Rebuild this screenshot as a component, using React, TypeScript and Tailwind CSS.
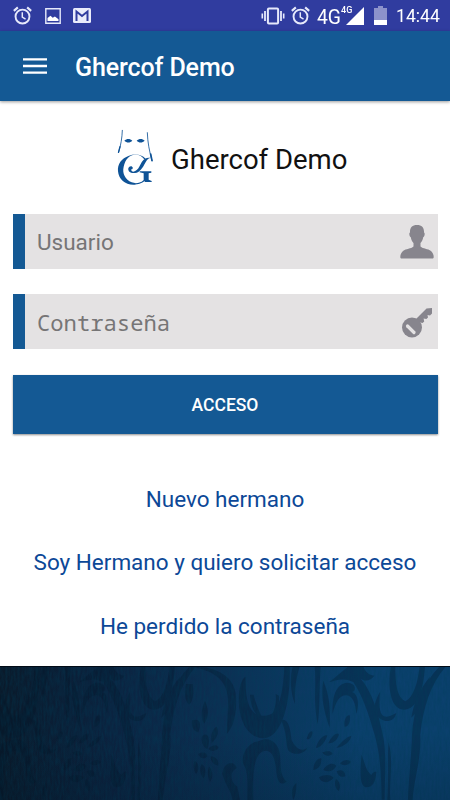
import React from 'react';

function AlarmIcon({ className }: { className?: string }) {
  return (
    <svg viewBox="0 0 18 18" className={className} fill="none" stroke="#e6e9fb">
      <circle cx="9" cy="10" r="6.6" strokeWidth="1.8" />
      <path d="M8.800 6v4.500l3.100 1.900" strokeWidth="1.4" />
      <path d="M.8 4.600 4.600 1.300M17.200 4.600l-3.800-3.300" strokeWidth="2" />
    </svg>
  );
}

function StatusBar() {
  return (
    <div className="flex h-[31px] shrink-0 items-center bg-[#303c9f] pl-[13px] pr-[10px] text-white">
      <AlarmIcon className="h-[19px] w-[19px]" />
      <svg viewBox="0 0 16 16" className="ml-[13px] h-4 w-4">
        <path d="M.8.8h14.400v14.400H.8z" fill="none" stroke="#e6e9fb" strokeWidth="1.400" />
        <path d="M2.500 13V10l3-2.200 2.200 2 2.200-1.300 3.600 2.800V13z" fill="#fff" />
      </svg>
      <svg viewBox="0 0 18 15" className="ml-[12px] h-[15px] w-[18px]">
        <rect width="18" height="15" rx="1.5" fill="#e9ebfb" />
        <path d="M3.500 13V3.500L9 8l5.500-4.500V13" fill="none" stroke="#303c9f" strokeWidth="2" />
      </svg>

      <div className="ml-auto flex items-center">
        <svg viewBox="0 0 24 18" className="mr-[-1px] h-[18px] w-6" fill="none" stroke="#e6e9fb">
          <rect x="6.900" y="1.400" width="10.200" height="15.200" rx="1" strokeWidth="2" />
          <path d="M4 4v10M20 4v10" strokeWidth="1.800" />
          <path d="M1.300 6.500v5M22.700 6.500v5" strokeWidth="1.600" />
        </svg>
        <AlarmIcon className="ml-[7px] h-[19px] w-[19px]" />
        <span className="ml-[7px] mt-[2px] w-[24px] origin-left scale-x-[.92] text-[21px] leading-5">4G</span>
        <span className="mb-[11px] w-[12px] origin-left scale-x-95 text-[9.500px] font-medium leading-[10px]">4G</span>
        <svg viewBox="0 0 18 18" className="-ml-[7px] h-[18px] w-[18px]">
          <path d="M18 0v18H0z" fill="#fff" />
        </svg>
        <svg viewBox="0 0 13 19" className="ml-[10px] h-[19px] w-[13px]">
          <path d="M0 2h4V0h5v2h4v12H0z" fill="#8c92cb" />
          <path d="M0 14h13v5H0z" fill="#fff" />
        </svg>
        <span className="ml-[9px] mt-px w-[44px] origin-left scale-x-[.98] whitespace-nowrap text-[18px] leading-5">14:44</span>
      </div>
    </div>
  );
}

function Logo() {
  return (
    <svg viewBox="0 0 120 180" className="h-[60px] w-10" fill="#0f5396">
      <g stroke="#0f5396" strokeLinecap="round" fill="none">
        <path d="M19 7C18 30 15 50 8 72" strokeWidth="2.500" />
        <path d="M12 56 7.500 73" strokeWidth="4" />
        <path d="M94 14c1 30 6 55 14 84" strokeWidth="2.500" />
        <path d="m104 78 4 20" strokeWidth="5" />
      </g>
      <path d="M25 38c7-7 17-7 24 0-7 7-17 7-24 0zM62 38c7-7 17-7 24 0-7 7-17 7-24 0z" />
      <path d="M89 92C76 79 57 76 39 83 16 91 4 108 6 130c2 25 24 42 50 40 18-1 31-9 40-22l-4-2c-12 18-29 23-45 17-19-8-29-27-24-47 5-22 16-35 34-36 12-1 22 5 29 15z" />
      <path d="M104 90c-7 0-11 5-16 14-8 15-16 29-31 31-13 2-22-5-20-14 2-7 10-9 13-3 1 4-1 7-5 6 1 7 6 8 11 6 12-4 16-20 23-30 6-8 14-12 25-10z" />
      <path d="M71 130h35v4l-8 2v19l9 4v3H87l-4-6v-20l-12-3z" />
    </svg>
  );
}

function Field({ label, mono, children }: { label: string; mono?: boolean; children: React.ReactNode }) {
  return (
    <div className="flex h-[55px] items-center border-l-[12px] border-[#145994] bg-[#e4e2e3] pl-[12.500px] pr-1">
      <span
        className={
          mono
            ? "flex-1 pt-[2px] font-['Noto_Sans_Mono','DejaVu_Sans_Mono',monospace] text-[22.200px] text-[#767576]"
            : 'flex-1 pt-[3px] text-[22.500px] text-[#767576]'
        }
      >
        {label}
      </span>
      {children}
    </div>
  );
}

// One repeat of the damask, drawn twice across the footer
function Damask() {
  return (
    <g fill="#04182b">
      <path d="M556 5c50 8 102 20 121 67 15 38 2 92 4 137 24-24 31-79 26-121C699 33 645 5 556 5zM558 60c-6 25-4 50 9 62 13-10 15-35 11-62z" />
      <path d="M737 38c-23 10-28 94-8 137 11 28 34 49 63 48 49-2 81-94 77-216h-16c-2 52-11 140-45 145-44 15-72-17-71-99z" />
      <path d="M750 92c2 37 15 64 40 75-14-26-25-56-29-75zM827 90c3 23-2 51-17 72 20-8 29-34 27-67z" />
      <path d="M730 300c-8-27 13-65 45-68 34-18 60 5 65 39 3 38-1 62 20 82-23 16-28-5-31-31-4-39-11-60-30-62-34 2-42 48-39 148h-18c0-48 4-86-12-108z" />
      <path d="M843 168c24-8 29 33 32 61 13 25 29 36 47 22-10 23-52 24-59 3-6-22-2-48-20-86zM667 330c4-37 35-43 43-18-23 12-20 43 2 56l8 40h-22c-5-29-20-40-31-78z" />
      <path d="M878 8c-9 37-6 77 7 113-2-48 4-80 14-113zM944 8c6 57-5 93 9 173 8-54 4-105 9-173zM970 50c-9 48 3 95 19 141 3-64-2-100-19-141z" />
      <path d="M998 150c-2-50 9-91 44-94 27 0 28 27 14 28 22 7 21 46 13 66-2-29-10-55-30-56-21 0-32 20-41 56z" />
      <path d="M987 55c19-15 41-34 57-47h46c8 19 21 26 33 27-10 16-29 18-41 9 34 38 52 101 65 161 14 56 7 132 7 202h-9c-1-77-4-146-27-214-13-46-31-99-58-139-27-15-55-5-73 1z" />
      <path d="M1140 84c-5 64 1 91 49 63-5 30-43 33-61 4-11-17-1-45 12-67z" />
      <path d="M1173 8c-11 55-3 127 38 129 42 0 59-58 64-129h-16c-6 48-17 90-43 104-24-12-30-49-30-104z" />
      <path d="M1318 8c-49 50-77 122-82 205-2 72-11 142-12 195h14c6-76 26-120 23-197 8-78 31-153 76-203zM1290 38c-33 39-49 83-56 123 34-32 41-70 56-123zM1166 235c-4 39 1 91-4 173h9c-4-72 11-110-5-173z" />
      <path d="M1085 272c11 31 13 47 29 61 6-10 11-11 15-9-2 33-13 47-31 46-20-5-18-47-13-98zM880 408c-8-23-3-43 9-51 1 19-2 39-9 51z" />
      <path d="M920 225c5-20 14-28 18-20-2 17-11 24-18 20zM948 252c6-27 27-43 34-37-8 23-21 35-34 37zM985 238c13-27 29-34 32-26-7 20-20 26-32 26zM940 318c0-22 14-38 24-35 2 20-10 34-24 35zM970 318c9-17 29-25 39-12-8 16-25 20-39 12zM1009 252c17-20 28-31 45-37 0 14-20 33-45 37zM957 340c17-11 38-8 44 2-15 17-37 17-44-2zM1010 322c17-9 27 3 26 15-14 5-22-2-26-15zM1020 298c12-13 27-13 33-4-10 12-25 13-33 4zM1008 345c14 8 15 28 8 36-11-9-14-25-8-36zM967 265c12-3 25-7 31 4-11 10-25 7-31-4zM1034 188c-4-19 7-39 16-33 2 18-5 35-16 33z" />
      <path d="M576 169c23-7 30 7 19 36-15-4-22-17-19-36zM615 110c12 27 12 49-3 69-11-19-8-45 3-69zM607 216c14-12 28 2 15 40-15-9-20-25-15-40zM650 188c11 19-2 37-15 49-5-21 2-42 15-49zM625 255c12-15 28-14 31-4-11 12-21 13-31 4zM595 270c16-10 27-1 27 8-12 8-22 6-27-8zM585 290c12 8 14 28 3 40-9-13-9-31-3-40zM632 277c17 1 27 15 22 28-15-4-23-15-22-28zM605 300c13 6 15 31 5 43-11-14-12-31-5-43zM628 308c11 11 12 34 2 45-8-15-9-34-2-45z" />
    </g>
  );
}

function Footer() {
  return (
    <svg viewBox="0 0 450 134" className="block h-[134px] w-full">
      <defs>
        <linearGradient id="base" x1="0" x2="1" y1="0" y2="0">
          <stop offset="0" stopColor="#0a1a2b" />
          <stop offset=".25" stopColor="#0b2340" />
          <stop offset=".5" stopColor="#0c3054" />
          <stop offset=".8" stopColor="#0b406d" />
          <stop offset="1" stopColor="#0b406d" />
        </linearGradient>
        <linearGradient id="fade" x1="0" x2="0" y1="0" y2="1">
          <stop offset=".5" stopColor="#02101e" stopOpacity="0" />
          <stop offset="1" stopColor="#02101e" stopOpacity=".18" />
        </linearGradient>
        <filter id="grain" x="0" y="0" width="100%" height="100%">
          <feTurbulence type="fractalNoise" baseFrequency=".5 .1" numOctaves="3" seed="4" />
          <feColorMatrix values="0 0 0 0 0  0 0 0 0 .05  0 0 0 0 .1  1.4 0 0 0 -.4" />
        </filter>
      </defs>
      <rect width="450" height="134" fill="url(#base)" />
      <g opacity=".34" transform="translate(0 -2) scale(.3333)">
        <g transform="translate(-750 0)">
          <Damask />
        </g>
        <Damask />
      </g>
      <rect width="450" height="134" filter="url(#grain)" opacity=".45" />
      <rect width="450" height="134" fill="url(#fade)" />
      <path d="M0 .5h450" stroke="#010b16" />
    </svg>
  );
}

export default function App() {
  return (
    <div className="flex h-[800px] w-[450px] flex-col overflow-hidden bg-white font-[Roboto,sans-serif]">
      <StatusBar />
      <header className="flex h-[70px] shrink-0 items-center bg-[#145994] pl-[23px] text-white shadow-[0_1px_3px_rgba(0,0,0,0.4)]">
        <svg viewBox="0 0 24 16" className="h-4 w-6" stroke="#fff" strokeWidth="2.300">
          <path d="M0 1.300h24M0 8h24M0 14.700h24" />
        </svg>
        <h1 className="ml-[28px] pt-[3px] text-[25px] font-medium leading-8 tracking-[-0.1px]">Ghercof Demo</h1>
      </header>

      <main className="flex h-[565px] flex-col px-[12.500px]">
        <div className="mt-[27px] flex h-[60px] items-center pl-[103.500px]">
          <Logo />
          <span className="ml-[15px] pt-[3px] text-[27.500px] leading-8 text-[#111]">Ghercof Demo</span>
        </div>

        <div className="mt-[26px] flex flex-col gap-[25px]">
          <Field label="Usuario">
            <svg viewBox="0 0 34 34" className="h-[34px] w-[34px]" fill="#87858d">
              <path d="M17 0c-5 0-7.300 3-7 7.500-1.200.3-.7 4 .8 4.800.5 3 1.500 4.500 2.700 5.700v3.500C11 24 6 23.500 3 26c-2 1.700-2.700 4-2.700 6 0 1 .6 1.500 1.500 1.500h30.400c.9 0 1.500-.5 1.500-1.500 0-2-.7-4.300-2.700-6-3-2.500-8-2-10.500-4.500V18c1.200-1.200 2.200-2.700 2.700-5.700 1.500-.8 2-4.500.8-4.800C24.300 3 22 0 17 0z" />
            </svg>
          </Field>
          <Field label="Contraseña" mono>
            <svg viewBox="0 0 32 32" className="mr-px mt-[2px] h-8 w-8">
              <path d="M14 13 25.500 1.500 31 1v5.500l-2 2-2.500-.5.500 2.500-1.600 1.600-2.800-.6.600 2.900-1.600 1.600-2.400-.5z" fill="#87858d" />
              <circle cx="11" cy="20.500" r="10" fill="#87858d" />
              <path d="m6.500 19 6.500 6.500" stroke="#e4e2e3" strokeWidth="3.200" strokeLinecap="round" />
            </svg>
          </Field>
        </div>

        <button className="mt-[26px] h-[59px] shrink-0 bg-[#145994] pt-[2px] text-[17.500px] font-medium text-white shadow-[0_1px_2px_rgba(0,0,0,0.45)]">
          ACCESO
        </button>

        <nav className="mt-[49px] flex flex-col items-center gap-[31.500px] whitespace-nowrap text-[22.500px] leading-8 text-[#0c4897]">
          <a>Nuevo hermano</a>
          <a className="-mt-px mb-px">Soy Hermano y quiero solicitar acceso</a>
          <a>He perdido la contraseña</a>
        </nav>
      </main>
      <Footer />
    </div>
  );
}
